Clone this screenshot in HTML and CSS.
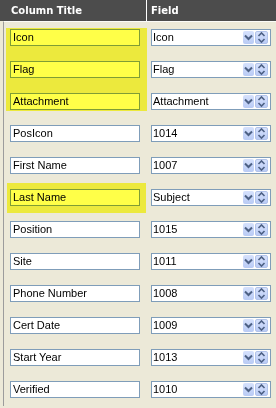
FILE: index.html
```html
<!DOCTYPE html>
<html>
<head>
<meta charset="utf-8">
<link rel="stylesheet" href="styles.css">
</head>
<body>
<div class="grid">
  <div class="head">
    <div class="hc hc1">Column Title</div>
    <div class="hc hc2">Field</div>
  </div>
  <div class="body">
    <div class="row"><div class="c1"><div class="tb">Icon</div></div><div class="c2"><div class="sel"><span class="val">Icon</span><span class="dd"><svg width="11" height="13" viewBox="0 0 11 13"><path d="M2 4.5 L5.5 8 L9 4.5" fill="none" stroke="#4d6185" stroke-width="2"/></svg></span><span class="spin"><svg width="13" height="13" viewBox="0 0 13 13"><path d="M3.5 5 L6.5 2 L9.5 5 M3.5 8 L6.5 11 L9.5 8" fill="none" stroke="#4d6185" stroke-width="1.6"/></svg></span></div></div></div>
    <div class="row"><div class="c1"><div class="tb">Flag</div></div><div class="c2"><div class="sel"><span class="val">Flag</span><span class="dd"><svg width="11" height="13" viewBox="0 0 11 13"><path d="M2 4.5 L5.5 8 L9 4.5" fill="none" stroke="#4d6185" stroke-width="2"/></svg></span><span class="spin"><svg width="13" height="13" viewBox="0 0 13 13"><path d="M3.5 5 L6.5 2 L9.5 5 M3.5 8 L6.5 11 L9.5 8" fill="none" stroke="#4d6185" stroke-width="1.6"/></svg></span></div></div></div>
    <div class="row"><div class="c1"><div class="tb">Attachment</div></div><div class="c2"><div class="sel"><span class="val">Attachment</span><span class="dd"><svg width="11" height="13" viewBox="0 0 11 13"><path d="M2 4.5 L5.5 8 L9 4.5" fill="none" stroke="#4d6185" stroke-width="2"/></svg></span><span class="spin"><svg width="13" height="13" viewBox="0 0 13 13"><path d="M3.5 5 L6.5 2 L9.5 5 M3.5 8 L6.5 11 L9.5 8" fill="none" stroke="#4d6185" stroke-width="1.6"/></svg></span></div></div></div>
    <div class="row"><div class="c1"><div class="tb">PosIcon</div></div><div class="c2"><div class="sel"><span class="val">1014</span><span class="dd"><svg width="11" height="13" viewBox="0 0 11 13"><path d="M2 4.5 L5.5 8 L9 4.5" fill="none" stroke="#4d6185" stroke-width="2"/></svg></span><span class="spin"><svg width="13" height="13" viewBox="0 0 13 13"><path d="M3.5 5 L6.5 2 L9.5 5 M3.5 8 L6.5 11 L9.5 8" fill="none" stroke="#4d6185" stroke-width="1.6"/></svg></span></div></div></div>
    <div class="row"><div class="c1"><div class="tb">First Name</div></div><div class="c2"><div class="sel"><span class="val">1007</span><span class="dd"><svg width="11" height="13" viewBox="0 0 11 13"><path d="M2 4.5 L5.5 8 L9 4.5" fill="none" stroke="#4d6185" stroke-width="2"/></svg></span><span class="spin"><svg width="13" height="13" viewBox="0 0 13 13"><path d="M3.5 5 L6.5 2 L9.5 5 M3.5 8 L6.5 11 L9.5 8" fill="none" stroke="#4d6185" stroke-width="1.6"/></svg></span></div></div></div>
    <div class="row"><div class="c1"><div class="tb">Last Name</div></div><div class="c2"><div class="sel"><span class="val">Subject</span><span class="dd"><svg width="11" height="13" viewBox="0 0 11 13"><path d="M2 4.5 L5.5 8 L9 4.5" fill="none" stroke="#4d6185" stroke-width="2"/></svg></span><span class="spin"><svg width="13" height="13" viewBox="0 0 13 13"><path d="M3.5 5 L6.5 2 L9.5 5 M3.5 8 L6.5 11 L9.5 8" fill="none" stroke="#4d6185" stroke-width="1.6"/></svg></span></div></div></div>
    <div class="row"><div class="c1"><div class="tb">Position</div></div><div class="c2"><div class="sel"><span class="val">1015</span><span class="dd"><svg width="11" height="13" viewBox="0 0 11 13"><path d="M2 4.5 L5.5 8 L9 4.5" fill="none" stroke="#4d6185" stroke-width="2"/></svg></span><span class="spin"><svg width="13" height="13" viewBox="0 0 13 13"><path d="M3.5 5 L6.5 2 L9.5 5 M3.5 8 L6.5 11 L9.5 8" fill="none" stroke="#4d6185" stroke-width="1.6"/></svg></span></div></div></div>
    <div class="row"><div class="c1"><div class="tb">Site</div></div><div class="c2"><div class="sel"><span class="val">1011</span><span class="dd"><svg width="11" height="13" viewBox="0 0 11 13"><path d="M2 4.5 L5.5 8 L9 4.5" fill="none" stroke="#4d6185" stroke-width="2"/></svg></span><span class="spin"><svg width="13" height="13" viewBox="0 0 13 13"><path d="M3.5 5 L6.5 2 L9.5 5 M3.5 8 L6.5 11 L9.5 8" fill="none" stroke="#4d6185" stroke-width="1.6"/></svg></span></div></div></div>
    <div class="row"><div class="c1"><div class="tb">Phone Number</div></div><div class="c2"><div class="sel"><span class="val">1008</span><span class="dd"><svg width="11" height="13" viewBox="0 0 11 13"><path d="M2 4.5 L5.5 8 L9 4.5" fill="none" stroke="#4d6185" stroke-width="2"/></svg></span><span class="spin"><svg width="13" height="13" viewBox="0 0 13 13"><path d="M3.5 5 L6.5 2 L9.5 5 M3.5 8 L6.5 11 L9.5 8" fill="none" stroke="#4d6185" stroke-width="1.6"/></svg></span></div></div></div>
    <div class="row"><div class="c1"><div class="tb">Cert Date</div></div><div class="c2"><div class="sel"><span class="val">1009</span><span class="dd"><svg width="11" height="13" viewBox="0 0 11 13"><path d="M2 4.5 L5.5 8 L9 4.5" fill="none" stroke="#4d6185" stroke-width="2"/></svg></span><span class="spin"><svg width="13" height="13" viewBox="0 0 13 13"><path d="M3.5 5 L6.5 2 L9.5 5 M3.5 8 L6.5 11 L9.5 8" fill="none" stroke="#4d6185" stroke-width="1.6"/></svg></span></div></div></div>
    <div class="row"><div class="c1"><div class="tb">Start Year</div></div><div class="c2"><div class="sel"><span class="val">1013</span><span class="dd"><svg width="11" height="13" viewBox="0 0 11 13"><path d="M2 4.5 L5.5 8 L9 4.5" fill="none" stroke="#4d6185" stroke-width="2"/></svg></span><span class="spin"><svg width="13" height="13" viewBox="0 0 13 13"><path d="M3.5 5 L6.5 2 L9.5 5 M3.5 8 L6.5 11 L9.5 8" fill="none" stroke="#4d6185" stroke-width="1.6"/></svg></span></div></div></div>
    <div class="row"><div class="c1"><div class="tb">Verified</div></div><div class="c2"><div class="sel"><span class="val">1010</span><span class="dd"><svg width="11" height="13" viewBox="0 0 11 13"><path d="M2 4.5 L5.5 8 L9 4.5" fill="none" stroke="#4d6185" stroke-width="2"/></svg></span><span class="spin"><svg width="13" height="13" viewBox="0 0 13 13"><path d="M3.5 5 L6.5 2 L9.5 5 M3.5 8 L6.5 11 L9.5 8" fill="none" stroke="#4d6185" stroke-width="1.6"/></svg></span></div></div></div>
    <div class="hl hl1"></div>
    <div class="hl hl2"></div>
  </div>
</div>
</body>
</html>
```

FILE: styles.css
```css
* { box-sizing: border-box; }
body {
  margin: 0;
  width: 276px;
  height: 408px;
  overflow: hidden;
  background: #ece9d8;
  font-family: "Liberation Sans", Arial, sans-serif;
  font-size: 11px;
  color: #000;
}
.head {
  display: grid;
  grid-template-columns: 147px 1fr;
  height: 21px;
  background: #4c4c4c;
  color: #fff;
  font-family: "DejaVu Sans", Verdana, sans-serif;
  font-weight: bold;
  font-size: 10px;
}
.hc {
  display: flex;
  align-items: center;
}
.hc1 {
  padding-left: 11px;
  border-right: 1px solid #fff;
}
.hc2 {
  padding-left: 4px;
}
.body {
  position: relative;
  margin-left: 3px;
  border-left: 1px solid #9c9c9c;
  border-top: 1px solid #fbfbf8;
}
.row {
  display: grid;
  grid-template-columns: 143px 1fr;
  height: 32px;
  padding-top: 7px;
}
.tb {
  margin-left: 6px;
  width: 130px;
  height: 17px;
  border: 1px solid #7f9db9;
  background: #fff;
  padding-left: 2px;
  line-height: 15px;
  white-space: nowrap;
}
.sel {
  margin-left: 4px;
  width: 120px;
  height: 17px;
  border: 1px solid #7f9db9;
  background: #fff;
  display: flex;
  align-items: center;
  padding-right: 2px;
}
.val {
  flex: 1;
  padding-left: 1px;
  line-height: 15px;
}
.dd {
  width: 11px;
  height: 13px;
  margin-right: 1px;
  background: linear-gradient(#d6e1fc, #b9cbf5);
  border-radius: 2px;
  display: flex;
}
.spin {
  width: 13px;
  height: 13px;
  background: linear-gradient(#d6e1fc, #b9cbf5);
  border: 1px solid #b2c3ea;
  border-radius: 2px;
  display: flex;
  align-items: center;
  justify-content: center;
}
.spin svg {
  flex: none;
}
.hl {
  position: absolute;
  background: #ffff48;
  mix-blend-mode: multiply;
  pointer-events: none;
}
.hl1 {
  left: 2px;
  top: 6px;
  width: 141px;
  height: 83px;
}
.hl2 {
  left: 3px;
  top: 161px;
  width: 139px;
  height: 30px;
}
```
